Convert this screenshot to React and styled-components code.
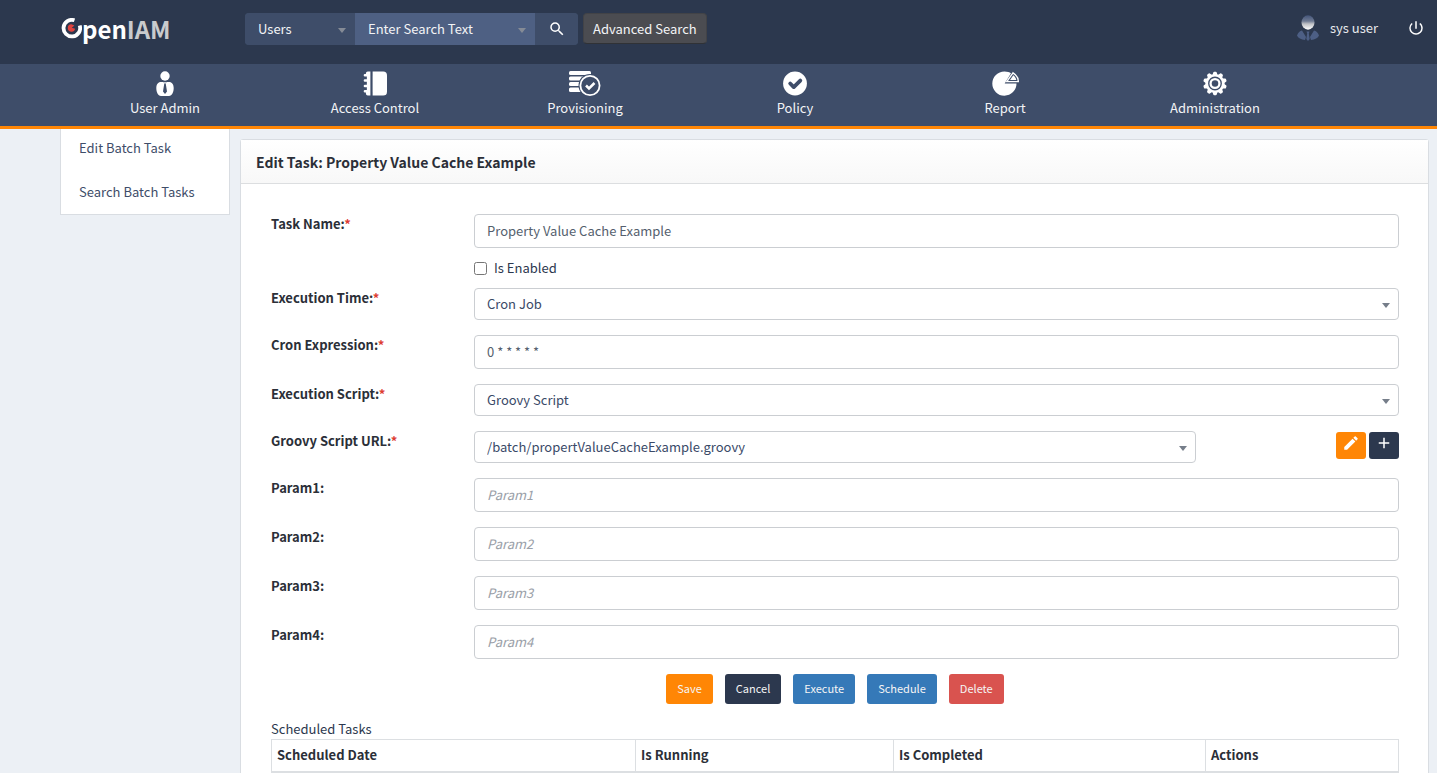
import React, { useState } from 'react'
import styled, { createGlobalStyle } from 'styled-components'
import { MdAdd, MdEdit, MdPowerSettingsNew, MdSearch } from 'react-icons/md'

const GlobalStyle = createGlobalStyle`
  * {
    box-sizing: border-box;
  }

  body {
    margin: 0;
    background: #ecf0f5;
    color: #2c384e;
    font-family: "Noto Sans CJK SC", "Noto Sans", sans-serif;
    font-size: 13px;
    line-height: 20px;
  }

  button, input, select {
    font: inherit;
  }
`;

const TopBar = styled.header`
  display: flex;
  align-items: flex-start;
  height: 64px;
  padding: 13px 12px 0 61px;
  background: #2c384e;
`;

const LogoLink = styled.a`
  display: flex;
  align-items: center;
  width: 184px;
  height: 32px;
  color: #fff;
  font-size: 24px;
  font-weight: 700;
  line-height: 30px;
  text-decoration: none;

  svg {
    flex: none;
  }
`;

const LogoTail = styled.span`
  color: #c9cbcd;
`;

const SearchForm = styled.form`
  display: flex;
  align-items: flex-start;
`;

const SearchGroup = styled.div`
  display: flex;
  height: 32px;
  margin-right: 5px;
  border-radius: 4px;
  overflow: hidden;
  background: #3e4d69;
`;

const Dropdown = styled.div`
  position: relative;
  width: ${(p) => p.$width || '100%'};

  &::after {
    content: "";
    position: absolute;
    top: calc(50% - 1px);
    right: 9px;
    border: solid transparent;
    border-width: 5px 4px 0;
    border-top-color: ${(p) => (p.$dark ? '#858b96' : '#767e8a')};
    pointer-events: none;
  }
`;

const SearchType = styled.select`
  appearance: none;
  width: 100%;
  height: 32px;
  padding: 0 20px 0 13px;
  border: 0;
  background: #3e4d69;
  color: #f3f4f6;
`;

const SearchText = styled.input`
  width: 100%;
  height: 32px;
  padding: 0 20px 2px 13px;
  border: 0;
  background: #4e6083;
  color: #f3f4f6;

  &::placeholder {
    color: #f3f4f6;
    opacity: 1;
  }
`;

const SearchButton = styled.button`
  display: flex;
  align-items: center;
  justify-content: center;
  width: 43px;
  height: 32px;
  padding: 0;
  border: 0;
  background: #3e4d69;
  color: #fff;
`;

const AdvancedButton = styled.button`
  height: 31px;
  padding: 0 9px;
  border: 1px solid #424347;
  border-bottom-color: #303236;
  border-radius: 4px;
  background: #4b4c51;
  color: #f3f4f6;
`;

const UserMenu = styled.div`
  display: flex;
  align-items: center;
  height: 30px;
  margin-left: auto;
  color: #e8eaed;
`;

const UserName = styled.span`
  margin: 0 29px 0 11px;
`;

const LogoutButton = styled.button`
  display: flex;
  padding: 0;
  border: 0;
  background: none;
  color: #fff;
`;

const MainNav = styled.nav`
  display: grid;
  grid-template-columns: repeat(6, 1fr);
  padding: 7px 117px 8px 60px;
  border-bottom: 3px solid #ff8605;
  background: #3e4d69;
`;

const NavItem = styled.a`
  display: flex;
  flex-direction: column;
  align-items: center;
  gap: 2px;
  color: #f3f4f6;
  text-decoration: none;
`;

const Layout = styled.div`
  display: flex;
  align-items: flex-start;
  padding: 0 8px 0 60px;
`;

const SideMenu = styled.nav`
  flex: none;
  width: 170px;
  margin-right: 10px;
  padding-bottom: 2px;
  border: 1px solid #d9dde2;
  border-top: 0;
  background: #fff;
`;

const SideLink = styled.a`
  display: block;
  padding: 9px 18px 15px;
  color: #3e4d69;
  text-decoration: none;

  &:last-child {
    padding-bottom: 10px;
  }
`;

const Panel = styled.main`
  flex: 1;
  min-width: 0;
  margin-top: 10px;
  border: 1px solid #d9dde2;
  border-radius: 3px 3px 0 0;
  background: #fff;
`;

const PanelTitle = styled.h1`
  margin: 0;
  padding: 12px 15px 11px;
  border-bottom: 1px solid #dcdee0;
  background: linear-gradient(#fff, #f8f8f8);
  color: #2b2f38;
  font-size: 14px;
  font-weight: 700;
  line-height: 20px;
`;

const PanelBody = styled.div`
  padding: 30px 29px 20px 30px;
`;

const FieldRow = styled.div`
  display: grid;
  grid-template-columns: 18% 1fr;
  margin-bottom: ${(p) => (p.$tight ? '0' : '15px')};
`;

const Label = styled.label`
  height: 20px;
  color: #2b2f38;
  font-weight: 700;
`;

const Required = styled.span`
  color: #dd3c33;
`;

const TextInput = styled.input`
  width: 100%;
  height: 34px;
  padding: 0 12px 2px;
  border: 1px solid #cbced2;
  border-radius: 4px;
  background: #fff;
  color: #555f6e;

  &::placeholder {
    color: #9aa0a8;
    font-style: italic;
    opacity: 1;
  }
`;

const Select = styled.select`
  display: block;
  appearance: none;
  width: 100%;
  height: 32px;
  padding: 0 24px 0 12px;
  border: 1px solid #cbced2;
  border-radius: 4px;
  background: #fff;
  color: #3a4a68;
`;

const CheckRow = styled.div`
  display: flex;
  align-items: center;
  grid-column: 2;
  height: 40px;
`;

const CheckBox = styled.input`
  width: 13px;
  height: 13px;
  margin: 0 7px 0 0;
`;

const ScriptRow = styled.div`
  display: flex;
  justify-content: space-between;
`;

const IconButtons = styled.div`
  display: flex;
  gap: 3px;
  padding-top: 1px;
`;

const IconButton = styled.button`
  display: flex;
  justify-content: center;
  width: 30px;
  height: 27px;
  padding: 2px 0 0;
  border: 0;
  border-radius: 3px;
  background: ${(p) => p.$color};
  color: #fff;
`;

const Actions = styled.div`
  display: flex;
  justify-content: center;
  gap: 12px;
  margin-bottom: 15px;
`;

const ActionButton = styled.button`
  height: 30px;
  padding: 0 11px 2px;
  border: 0;
  border-radius: 3px;
  background: ${(p) => p.$color};
  color: #f5f5f5;
  font-size: 11px;
`;

const TaskTable = styled.table`
  width: 100%;
  border-collapse: collapse;
  table-layout: fixed;

  caption {
    text-align: left;
  }

  th {
    height: 32px;
    padding: 0 5px;
    border: 1px solid #dcdfe2;
    border-bottom-width: 2px;
    color: #2b2f38;
    font-weight: 700;
    text-align: left;
  }

  td {
    height: 32px;
    padding: 0 5px;
    border: 1px solid #dcdfe2;
  }
`;

const LogoMark = () => (
  <svg width="21" height="22" viewBox="0 0 21 22" aria-hidden="true">
    <path d="M13.500 2.300A8.300 8.300 0 1 0 18.700 7.500" fill="none" stroke="#fff" strokeWidth="3.800" />
    <path d="M13.400 7.400 10.800 9.700l3.300 1.100A3.700 3.700 0 1 1 10.300 6.300Z" fill="#e0433e" />
  </svg>
)

const Avatar = () => (
  <svg width="22" height="26" viewBox="0 0 22 26" aria-hidden="true">
    <defs>
      <linearGradient id="face" x1="0" y1="0" x2="0" y2="1">
        <stop offset="0" stopColor="#44557a" />
        <stop offset="0.4" stopColor="#6f7a92" />
        <stop offset="0.6" stopColor="#bfc1c5" />
        <stop offset="1" stopColor="#fff" />
      </linearGradient>
    </defs>
    <ellipse cx="11" cy="7.5" rx="6.5" ry="7.2" fill="url(#face)" />
    <path d="M5 15.500 9 22l-1 3C4 24.500 1 23 0 20.500 1 17.500 3 16 5 15.500ZM17 15.500 13 22l1 3c4-.5 7-2 8-4.500-1-3-3-4.500-5-5ZM9.500 16.500h3l-.7 2 .9 5.500-1.700 2-1.700-2 .9-5.500Z" fill="#4d5f85" />
  </svg>
)

const UserAdminIcon = () => (
  <svg width="18" height="25" viewBox="0 0 18 25" fill="#fff">
    <circle cx="9" cy="5" r="4.700" />
    <path d="M5 11h2.600l.6 2-1.200 7.500L9 23l2-2.500L9.800 13l.6-2H13c3 0 4.700 2.500 4.700 6 0 4-1.700 8-4.700 8H5c-3 0-4.700-4-4.700-8C.3 13.500 2 11 5 11Z" />
    <path d="M8.200 11h1.600l-.4 2h-.8Z" />
  </svg>
)

const AccessIcon = () => (
  <svg width="24" height="25" viewBox="0 0 25 25" fill="#fff">
    <path d="M10 0h11q4 0 4 4v17q0 4-4 4H10Z" />
    <path d="M5 0h2.700v25H5q-2 0-2-2v-1H2a1.300 1.300 0 0 1 0-2.600h2v-3H2a1.300 1.300 0 0 1 0-2.600h2v-3H2a1.300 1.300 0 0 1 0-2.600h2v-3H2A1.300 1.300 0 0 1 2 2.600h1V2q0-2 2-2Z" />
  </svg>
)

const ProvisioningIcon = () => (
  <svg width="32" height="25" viewBox="0 0 32 25">
    <g fill="#fff">
      <rect x="0" y="0" width="22" height="4" rx="1.500" />
      <rect x="0" y="5.500" width="19" height="4" rx="1.500" />
      <rect x="0" y="11" width="19" height="4" rx="1.500" />
      <rect x="0" y="16.500" width="19" height="4.500" rx="1.500" />
    </g>
    <circle cx="21" cy="14.500" r="11.500" fill="#3e4d69" />
    <circle cx="21" cy="14.500" r="9.600" fill="none" stroke="#fff" strokeWidth="1.800" />
    <path d="m17 14.500 3 3 5.500-5.500" fill="none" stroke="#fff" strokeWidth="2.500" />
  </svg>
)

const PolicyIcon = () => (
  <svg width="24" height="25" viewBox="0 0 25 25">
    <circle cx="12.500" cy="12.500" r="12.400" fill="#fff" />
    <path d="m7.500 12.500 3.700 3.700L18 9.400" fill="none" stroke="#3e4d69" strokeWidth="4" strokeLinecap="round" strokeLinejoin="round" />
  </svg>
)

const ReportIcon = () => (
  <svg width="27" height="25" viewBox="0 0 27 25">
    <path d="M12.500.500C15.500.500 17.500 1.300 19 2.300L12.700 12.500H24.500A12.100 12.100 0 1 1 12.500.500Z" fill="#fff" />
    <path d="M21 1.800 14.800 10.600H26.300C26.300 7 24.300 3.800 21 1.800Z" fill="#3e4d69" stroke="#fff" strokeWidth="1.400" />
    <path d="m21.300 4.300-3.200 4.700h6.200C24 7.200 22.900 5.500 21.300 4.300Z" fill="#fff" />
  </svg>
)

const AdministrationIcon = () => (
  <svg width="24" height="25" viewBox="0 0 25 25">
    <g fill="#fff">
      <circle cx="12.500" cy="12.500" r="10" />
      {[0, 36, 72, 108, 144, 180, 216, 252, 288, 324].map((angle) => (
        <path key={angle} d="M9.800 4 10.700 1q.2-.8 1-.8h1.600q.8 0 1 .8L15.200 4Z" transform={`rotate(${angle} 12.500 12.500)`} />
      ))}
    </g>
    <circle cx="12.500" cy="12.500" r="6.500" fill="none" stroke="#3e4d69" strokeWidth="1.400" />
    <circle cx="12.500" cy="12.500" r="3.400" fill="#3e4d69" />
  </svg>
)

const navItems = [
  { title: 'User Admin', icon: <UserAdminIcon /> },
  { title: 'Access Control', icon: <AccessIcon /> },
  { title: 'Provisioning', icon: <ProvisioningIcon /> },
  { title: 'Policy', icon: <PolicyIcon /> },
  { title: 'Report', icon: <ReportIcon /> },
  { title: 'Administration', icon: <AdministrationIcon /> },
]

const Header = () => (
  <>
    <TopBar>
      <LogoLink href="#home">
        <LogoMark />
        <span>pen<LogoTail>IAM</LogoTail></span>
      </LogoLink>
      <SearchForm onSubmit={(e) => e.preventDefault()}>
        <SearchGroup>
          <Dropdown $dark $width="110px">
            <SearchType aria-label="Search in">
              <option>Users</option>
            </SearchType>
          </Dropdown>
          <Dropdown $dark $width="180px">
            <SearchText aria-label="Search text" placeholder="Enter Search Text" />
          </Dropdown>
          <SearchButton type="submit" aria-label="Search"><MdSearch size={18} /></SearchButton>
        </SearchGroup>
        <AdvancedButton type="button">Advanced Search</AdvancedButton>
      </SearchForm>
      <UserMenu>
        <Avatar />
        <UserName>sys user</UserName>
        <LogoutButton aria-label="Log out"><MdPowerSettingsNew size={18} /></LogoutButton>
      </UserMenu>
    </TopBar>
    <MainNav>
      {navItems.map((item) => (
        <NavItem href="#" key={item.title}>
          {item.icon}
          {item.title}
        </NavItem>
      ))}
    </MainNav>
  </>
)

const Field = ({ id, label, required, children }) => (
  <FieldRow>
    <Label htmlFor={id}>{label}:{required && <Required>*</Required>}</Label>
    {children}
  </FieldRow>
)

export default function App() {
  const [name, setName] = useState('Property Value Cache Example')
  const [enabled, setEnabled] = useState(false)
  const [cron, setCron] = useState('0 * * * * *')

  return (
    <>
      <GlobalStyle />
      <Header />
      <Layout>
        <SideMenu>
          <SideLink href="#edit">Edit Batch Task</SideLink>
          <SideLink href="#search">Search Batch Tasks</SideLink>
        </SideMenu>
        <Panel>
          <PanelTitle>Edit Task: Property Value Cache Example</PanelTitle>
          <PanelBody>
            <FieldRow $tight>
              <Label htmlFor="name">Task Name:<Required>*</Required></Label>
              <TextInput id="name" value={name} onChange={(e) => setName(e.target.value)} />
              <CheckRow>
                <CheckBox id="enabled" type="checkbox" checked={enabled} onChange={() => setEnabled(!enabled)} />
                <label htmlFor="enabled">Is Enabled</label>
              </CheckRow>
            </FieldRow>
            <Field id="time" label="Execution Time" required>
              <Dropdown>
                <Select id="time"><option>Cron Job</option></Select>
              </Dropdown>
            </Field>
            <Field id="cron" label="Cron Expression" required>
              <TextInput id="cron" value={cron} onChange={(e) => setCron(e.target.value)} />
            </Field>
            <Field id="script" label="Execution Script" required>
              <Dropdown>
                <Select id="script"><option>Groovy Script</option></Select>
              </Dropdown>
            </Field>
            <Field id="url" label="Groovy Script URL" required>
              <ScriptRow>
                <Dropdown $width="78%">
                  <Select id="url"><option>/batch/propertValueCacheExample.groovy</option></Select>
                </Dropdown>
                <IconButtons>
                  <IconButton $color="#ff8605" aria-label="Edit script"><MdEdit size={18} /></IconButton>
                  <IconButton $color="#2c384e" aria-label="Add script"><MdAdd size={18} /></IconButton>
                </IconButtons>
              </ScriptRow>
            </Field>
            {['Param1', 'Param2', 'Param3', 'Param4'].map((param) => (
              <Field id={param} label={param} key={param}>
                <TextInput id={param} placeholder={param} />
              </Field>
            ))}
            <Actions>
              <ActionButton $color="#ff8605">Save</ActionButton>
              <ActionButton $color="#2c384e">Cancel</ActionButton>
              <ActionButton $color="#3579b8">Execute</ActionButton>
              <ActionButton $color="#3579b8">Schedule</ActionButton>
              <ActionButton $color="#d9534f">Delete</ActionButton>
            </Actions>
            <TaskTable>
              <caption>Scheduled Tasks</caption>
              <colgroup>
                <col width="364" />
                <col width="258" />
                <col width="312" />
                <col />
              </colgroup>
              <thead>
                <tr>
                  <th>Scheduled Date</th>
                  <th>Is Running</th>
                  <th>Is Completed</th>
                  <th>Actions</th>
                </tr>
              </thead>
              <tbody>
                <tr><td /><td /><td /><td /></tr>
              </tbody>
            </TaskTable>
          </PanelBody>
        </Panel>
      </Layout>
    </>
  )
}
